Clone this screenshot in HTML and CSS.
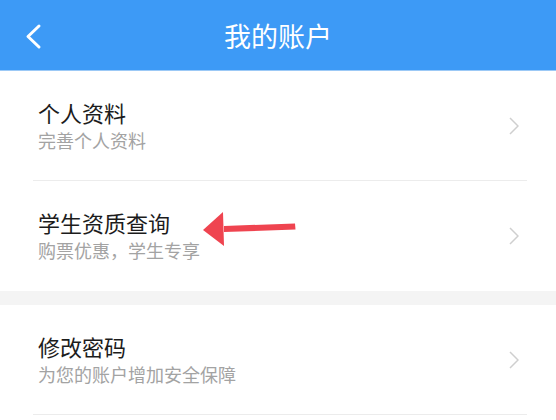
FILE: index.html
```html
<!DOCTYPE html>
<html lang="zh-CN">
<head>
<meta charset="utf-8">
<link rel="stylesheet" href="styles.css">
</head>
<body>
<div class="page">
  <header class="topbar">
    <svg class="back" width="20" height="28" viewBox="0 0 20 28"><polyline points="14,3 3,13.5 14,24" fill="none" stroke="#fff" stroke-width="3" stroke-linecap="round" stroke-linejoin="round"/></svg>
    <h1 class="title">我的账户</h1>
  </header>
  <section class="group first">
    <div class="row">
      <div class="text">
        <div class="main">个人资料</div>
        <div class="sub">完善个人资料</div>
      </div>
      <svg class="chev" width="10" height="18" viewBox="0 0 10 18"><polyline points="1,1 9,9 1,17" fill="none" stroke="#cfcfcf" stroke-width="1.5"/></svg>
    </div>
    <div class="row">
      <div class="text">
        <div class="main">学生资质查询</div>
        <div class="sub">购票优惠，学生专享</div>
      </div>
      <svg class="chev" width="10" height="18" viewBox="0 0 10 18"><polyline points="1,1 9,9 1,17" fill="none" stroke="#cfcfcf" stroke-width="1.5"/></svg>
      <svg class="arrow" width="100" height="40" viewBox="0 0 100 40"><polygon points="93,12.5 93.5,18.5 22,21 22,15" fill="#ef4450"/><polygon points="1,19 21,1 22,35" fill="#ef4450"/></svg>
    </div>
  </section>
  <div class="gap"></div>
  <section class="group">
    <div class="row">
      <div class="text">
        <div class="main">修改密码</div>
        <div class="sub">为您的账户增加安全保障</div>
      </div>
      <svg class="chev" width="10" height="18" viewBox="0 0 10 18"><polyline points="1,1 9,9 1,17" fill="none" stroke="#cfcfcf" stroke-width="1.5"/></svg>
    </div>
  </section>
</div>
</body>
</html>
```
FILE: styles.css
```css
* { box-sizing: border-box; }
html, body { margin: 0; padding: 0; background: #fff; }
body { font-family: "Noto Sans CJK SC", "Noto Sans", sans-serif; }
.page { width: 556px; height: 420px; overflow: hidden; }
.topbar {
  height: 71px;
  background: #3d9af6;
  border-bottom: 1px solid #9cc9f6;
  display: flex;
  align-items: center;
  justify-content: center;
  position: relative;
}
.back { position: absolute; left: 25px; top: 23px; }
.title {
  margin: 0;
  color: #fff;
  font-size: 27px;
  font-weight: 400;
  letter-spacing: 0;
  line-height: 1;
}
.group { background: #fff; }
.row {
  height: 110px;
  margin: 0 29px 0 33px;
  padding-left: 5px;
  display: flex;
  align-items: center;
  justify-content: space-between;
  border-bottom: 1px solid #ececec;
  position: relative;
}
.first .row:last-child { border-bottom-color: transparent; }
.text { display: flex; flex-direction: column; }
.main { font-size: 22px; line-height: 29px; color: #1c1c1c; }
.sub { font-size: 18px; line-height: 27px; color: #a3a3a3; }
.chev { margin-right: 8px; margin-top: 1px; }
.arrow { position: absolute; left: 169px; top: 30px; }
.gap { height: 14px; background: #f4f4f4; }
```
